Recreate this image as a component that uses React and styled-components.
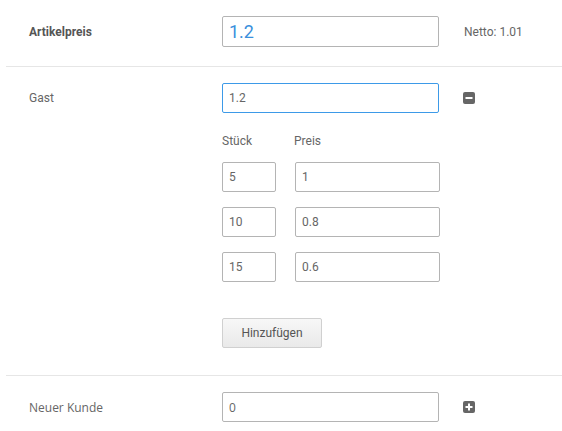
import styled, { createGlobalStyle } from "styled-components";

const GlobalStyle = createGlobalStyle`
  body {
    margin: 0;
    background: #fff;
    font-family: Roboto, "Liberation Sans", sans-serif;
    color: #666;
  }
`;

const Page = styled.div`
  padding-left: 6px;
  width: 556px;
`;

const Row = styled.div`
  display: flex;
  align-items: flex-start;
  padding: ${({ $pad }) => $pad || "16px 0 19px"};
  border-bottom: ${({ $last }) => ($last ? "none" : "1px solid #e6e6e6")};
  font-family: ${({ $font }) => $font || "inherit"};
`;

const Label = styled.div`
  width: 193px;
  padding-left: 23px;
  height: ${({ $h }) => $h || 30}px;
  display: flex;
  align-items: center;
  font-size: 12px;
  font-weight: ${({ $bold }) => ($bold ? 700 : 400)};
  color: ${({ $bold }) => ($bold ? "#555" : "#666")};
`;

const Field = styled.div`
  display: flex;
  flex-direction: column;
  width: 217px;
`;

const Input = styled.input`
  box-sizing: border-box;
  width: ${({ $w }) => $w || 217}px;
  height: ${({ $h }) => $h || 30}px;
  border: 1px solid ${({ $focus }) => ($focus ? "#3d9ae8" : "#b4b4b4")};
  border-radius: 2px;
  padding: 0 6px;
  font-family: inherit;
  font-size: ${({ $size }) => $size || 12}px;
  color: ${({ $blue }) => ($blue ? "#3a8fdc" : "#666")};
  outline: none;
  background: #fff;
`;

const Side = styled.div`
  height: ${({ $h }) => $h || 30}px;
  display: flex;
  align-items: center;
  margin-left: ${({ $gap }) => $gap || 24}px;
  font-size: 12px;
  color: #666;
`;

const Header = styled.div`
  display: flex;
  gap: 19px;
  margin-top: 19px;
  height: 17px;
  align-items: center;
  font-size: 12px;
  color: #666;
`;

const HeaderCell = styled.span`
  width: ${({ $w }) => $w}px;
`;

const TierList = styled.div`
  display: flex;
  flex-direction: column;
  gap: 15px;
  margin-top: 13px;
`;

const Tier = styled.div`
  display: flex;
  gap: 19px;
`;

const Button = styled.button`
  margin-top: 36px;
  width: 100px;
  height: 30px;
  border: 1px solid #d0d0d0;
  border-radius: 2px;
  background: linear-gradient(#f7f7f7, #e9e9e9);
  font-family: inherit;
  font-size: 12px;
  color: #555;
  cursor: pointer;
`;

const Icon = ({ type }) => (
  <svg width="12" height="12" viewBox="0 0 12 12">
    <rect x="0" y="0" width="12" height="12" rx="2" fill="#666" />
    <rect x="2.5" y="5" width="7" height="2" fill="#fff" />
    {type === "plus" && <rect x="5" y="2.5" width="2" height="7" fill="#fff" />}
  </svg>
);

const tiers = [
  { qty: "5", price: "1" },
  { qty: "10", price: "0.8" },
  { qty: "15", price: "0.6" },
];

export default function App() {
  return (
    <>
      <GlobalStyle />
      <Page>
        <Row>
          <Label $bold $h={31}>Artikelpreis</Label>
          <Input $h={31} $size={18} $blue defaultValue="1.2" />
          <Side $h={31} $gap={25}>Netto: 1.01</Side>
        </Row>
        <Row $pad="16px 0 27px">
          <Label>Gast</Label>
          <Field>
            <Input $focus defaultValue="1.2" />
            <Header>
              <HeaderCell $w={53}>Stück</HeaderCell>
              <HeaderCell $w={145}>Preis</HeaderCell>
            </Header>
            <TierList>
              {tiers.map((t) => (
                <Tier key={t.qty}>
                  <Input $w={54} defaultValue={t.qty} />
                  <Input $w={145} defaultValue={t.price} />
                </Tier>
              ))}
            </TierList>
            <div>
              <Button>Hinzufügen</Button>
            </div>
          </Field>
          <Side>
            <Icon type="minus" />
          </Side>
        </Row>
        <Row $last $pad="16px 0 9px" $font={'"Open Sans", sans-serif'}>
          <Label>Neuer Kunde</Label>
          <Input defaultValue="0" />
          <Side>
            <Icon type="plus" />
          </Side>
        </Row>
      </Page>
    </>
  );
}
